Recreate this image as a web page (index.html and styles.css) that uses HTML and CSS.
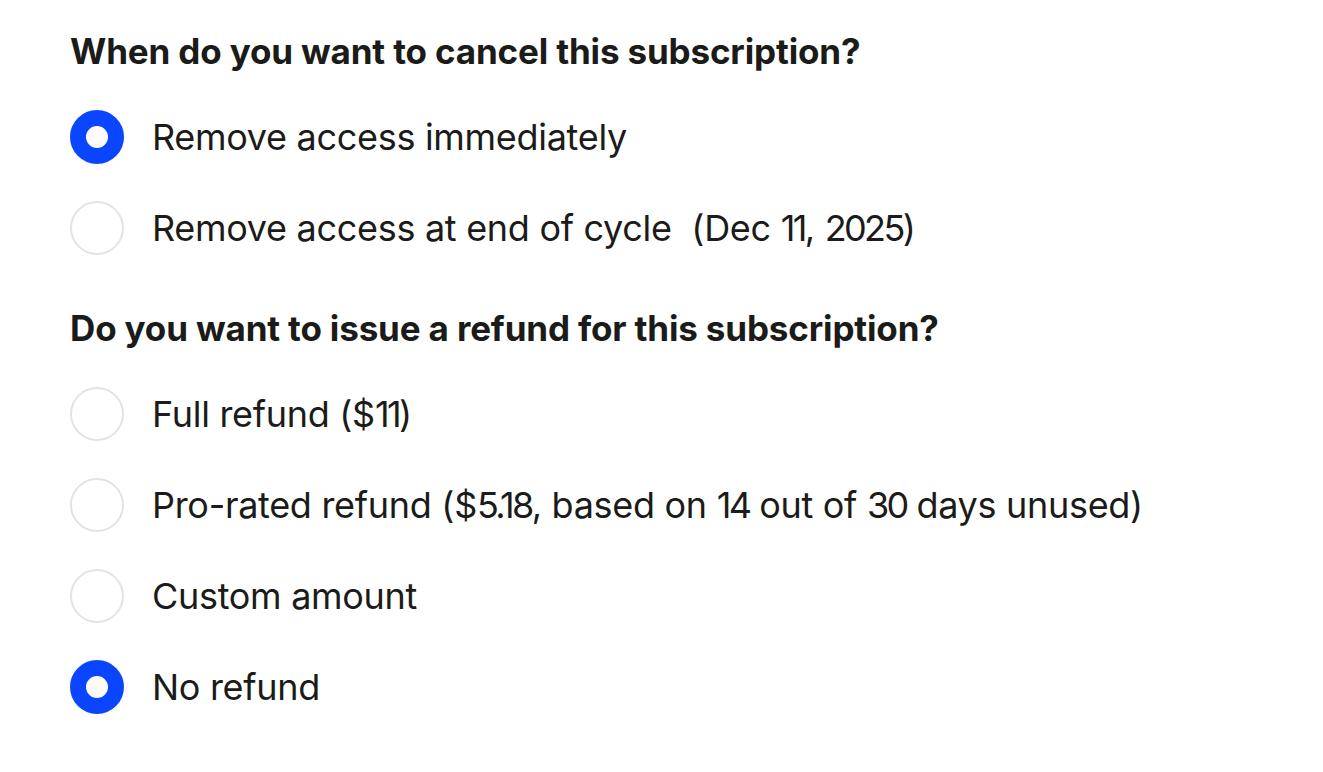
FILE: index.html
```html
<!DOCTYPE html>
<html lang="en">
<head>
<meta charset="utf-8">
<title>Cancel subscription</title>
<link rel="stylesheet" href="styles.css">
</head>
<body>
<main class="form">
  <section class="group group-cancel">
    <h2 class="question">When do you want to cancel this subscription?</h2>
    <div class="options">
      <label class="option"><span class="radio checked"></span><span class="label">Remove access immediately</span></label>
      <label class="option"><span class="radio"></span><span class="label">Remove access at end of cycle&nbsp; (Dec <span class="num">11</span>, <span class="num">2025</span>)</span></label>
    </div>
  </section>
  <section class="group group-refund">
    <h2 class="question">Do you want to issue a refund for this subscription?</h2>
    <div class="options">
      <label class="option"><span class="radio"></span><span class="label">Full refund ($<span class="num">11</span>)</span></label>
      <label class="option"><span class="radio"></span><span class="label">Pro-rated refund ($<span class="num">5.18</span>, based on <span class="num">14</span> out of <span class="num">30</span> days unused)</span></label>
      <label class="option"><span class="radio"></span><span class="label">Custom amount</span></label>
      <label class="option"><span class="radio checked"></span><span class="label">No refund</span></label>
    </div>
  </section>
</main>
</body>
</html>
```
FILE: styles.css
```css
html, body {
  margin: 0;
  padding: 0;
  background: #ffffff;
}
body {
  font-family: Inter, "Liberation Sans", sans-serif;
  color: #1b1b19;
}
.form {
  padding: 31px 0 0 70px;
  display: flex;
  flex-direction: column;
  gap: 53px;
}
.group {
  display: flex;
  flex-direction: column;
  gap: 39px;
}
.question {
  margin: 0;
  font-size: 35px;
  line-height: 40px;
  font-weight: 700;
  letter-spacing: -0.15px;
}
.options {
  display: flex;
  flex-direction: column;
  gap: 37px;
}
.option {
  display: flex;
  align-items: center;
  gap: 28px;
  height: 54px;
}
.radio {
  box-sizing: border-box;
  width: 54px;
  height: 54px;
  border-radius: 50%;
  border: 2px solid #e3e3e3;
  background: #ffffff;
  flex: none;
}
.radio.checked {
  border: 16px solid #0a45ff;
  background: #fdfcfb;
}
.label {
  font-size: 36px;
  line-height: 40px;
  font-weight: 400;
  letter-spacing: -0.3px;
}
.num {
  letter-spacing: -2.6px;
}
```
